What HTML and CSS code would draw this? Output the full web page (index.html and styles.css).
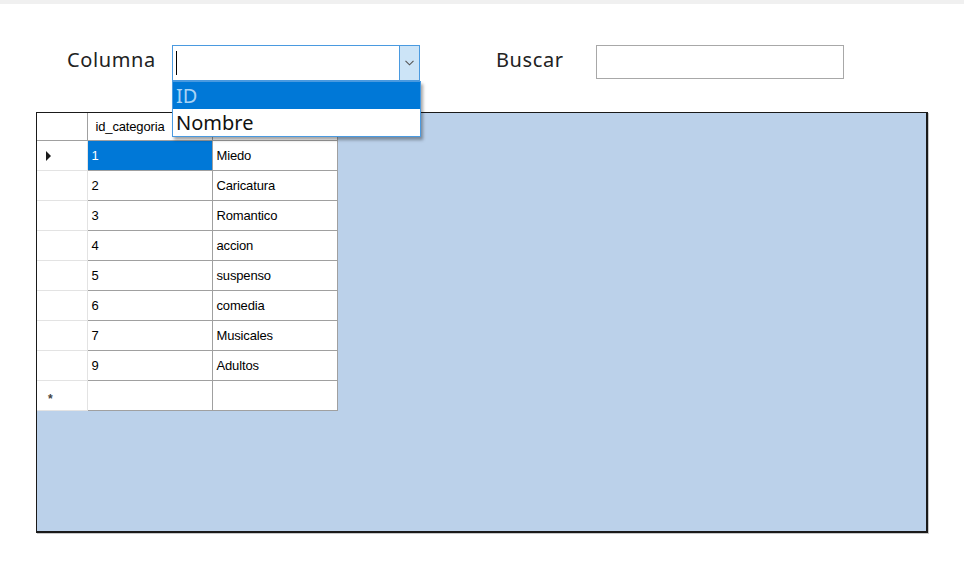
FILE: index.html
```html
<!DOCTYPE html>
<html>
<head>
<meta charset="utf-8">
<link rel="stylesheet" href="styles.css">
</head>
<body>
<div class="strip"></div>
<div class="form">
  <div class="toolbar">
    <span class="label label-col">Columna</span>
    <div class="combo">
      <div class="combo-text"><span class="caret"></span></div>
      <div class="combo-btn">
        <svg width="9" height="6" viewBox="0 0 9 6"><path d="M0.5 0.8 L4.5 4.8 L8.5 0.8" fill="none" stroke="#555" stroke-width="1.1"/></svg>
      </div>
    </div>
    <span class="label label-buscar">Buscar</span>
    <div class="textbox"></div>
  </div>
  <div class="droplist">
    <div class="item item-sel">ID</div>
    <div class="item">Nombre</div>
  </div>
  <div class="grid">
    <table class="dgv">
      <tr class="hdr">
        <td class="rh corner"></td>
        <td class="ch">id_categoria</td>
        <td class="ch"></td>
      </tr>
      <tr><td class="rh"><span class="tri"></span></td><td class="sel">1</td><td>Miedo</td></tr>
      <tr><td class="rh"></td><td>2</td><td>Caricatura</td></tr>
      <tr><td class="rh"></td><td>3</td><td>Romantico</td></tr>
      <tr><td class="rh"></td><td>4</td><td>accion</td></tr>
      <tr><td class="rh"></td><td>5</td><td>suspenso</td></tr>
      <tr><td class="rh"></td><td>6</td><td>comedia</td></tr>
      <tr><td class="rh"></td><td>7</td><td>Musicales</td></tr>
      <tr><td class="rh"></td><td>9</td><td>Adultos</td></tr>
      <tr><td class="rh"><span class="star">*</span></td><td></td><td></td></tr>
    </table>
  </div>
</div>
</body>
</html>
```

FILE: styles.css
```css
html, body {
  margin: 0;
  padding: 0;
  background: #ffffff;
  width: 964px;
  height: 564px;
  overflow: hidden;
}
.strip {
  height: 4px;
  background: #f0f0f0;
}
.form {
  position: relative;
  padding-top: 41px;
}
.toolbar {
  display: flex;
  align-items: flex-start;
  height: 36px;
}
.label {
  font-family: "Noto Sans", sans-serif;
  font-size: 20px;
  letter-spacing: 0.6px;
  color: #222;
  line-height: 29px;
}
.label-col {
  margin-left: 67px;
  width: 105px;
}
.label-buscar {
  margin-left: 76px;
  width: 100px;
}
.combo {
  width: 248px;
  height: 36px;
  box-sizing: border-box;
  border: 1px solid #4a9ae0;
  display: flex;
  background: #fff;
}
.combo-text {
  flex: 1;
  display: flex;
  align-items: center;
  padding-left: 3px;
}
.caret {
  width: 1px;
  height: 24px;
  background: #000;
}
.combo-btn {
  width: 19px;
  border-left: 1px solid #4a9ae0;
  background: #cce4f7;
  display: flex;
  align-items: center;
  justify-content: center;
}
.textbox {
  width: 248px;
  height: 34px;
  box-sizing: border-box;
  border: 1px solid #a8a8a8;
  background: #fff;
}
.droplist {
  position: absolute;
  left: 172px;
  top: 77px;
  width: 249px;
  box-sizing: border-box;
  border: 1px solid #4a9ae0;
  background: #fff;
  box-shadow: 2px 3px 3px rgba(0, 0, 0, 0.35);
  z-index: 5;
}
.item {
  height: 27px;
  line-height: 27px;
  padding-left: 3px;
  font-family: "Noto Sans", sans-serif;
  font-size: 20px;
  color: #111;
}
.item-sel {
  background: #0078d7;
  color: #a9d3f5;
}
.grid {
  margin-left: 36px;
  margin-top: 31px;
  width: 892px;
  height: 421px;
  box-sizing: border-box;
  border: 1px solid #1a1a1a;
  border-right-width: 2px;
  border-bottom-width: 2px;
  background: #bbd1ea;
  box-shadow: 1px 1px 0 #c8c8c8;
}
.dgv {
  border-collapse: collapse;
  table-layout: fixed;
  font-family: "Liberation Sans", Arial, sans-serif;
  font-size: 13px;
  letter-spacing: -0.15px;
  color: #000;
}
.dgv td {
  height: 30px;
  padding: 0 0 0 4px;
  border: 1px solid #a0a0a0;
  background: #fff;
  white-space: nowrap;
  overflow: hidden;
  box-sizing: border-box;
}
.dgv td:nth-child(2) { width: 125px; }
.dgv td:nth-child(3) { width: 125px; }
.dgv td.rh {
  width: 50px;
  border-color: #e3e3e3;
  border-left: none;
  padding: 0 0 0 9px;
}
.dgv tr:first-child td { border-top: none; }
.dgv tr.hdr td {
  height: 27px;
}
.dgv tr.hdr td.rh {
  border-bottom-color: #a0a0a0;
  border-right-color: #a0a0a0;
}
.dgv td.ch {
  padding-left: 8px;
  border-color: #a0a0a0;
}
.dgv td.sel {
  background: #0078d7;
  color: #fff;
}
.tri {
  display: inline-block;
  width: 0;
  height: 0;
  border-top: 5px solid transparent;
  border-bottom: 5px solid transparent;
  border-left: 5px solid #1a1a1a;
  vertical-align: middle;
}
.star {
  font-size: 12px;
  font-weight: bold;
  color: #444;
  position: relative;
  top: 3px;
  left: 2px;
}
```
